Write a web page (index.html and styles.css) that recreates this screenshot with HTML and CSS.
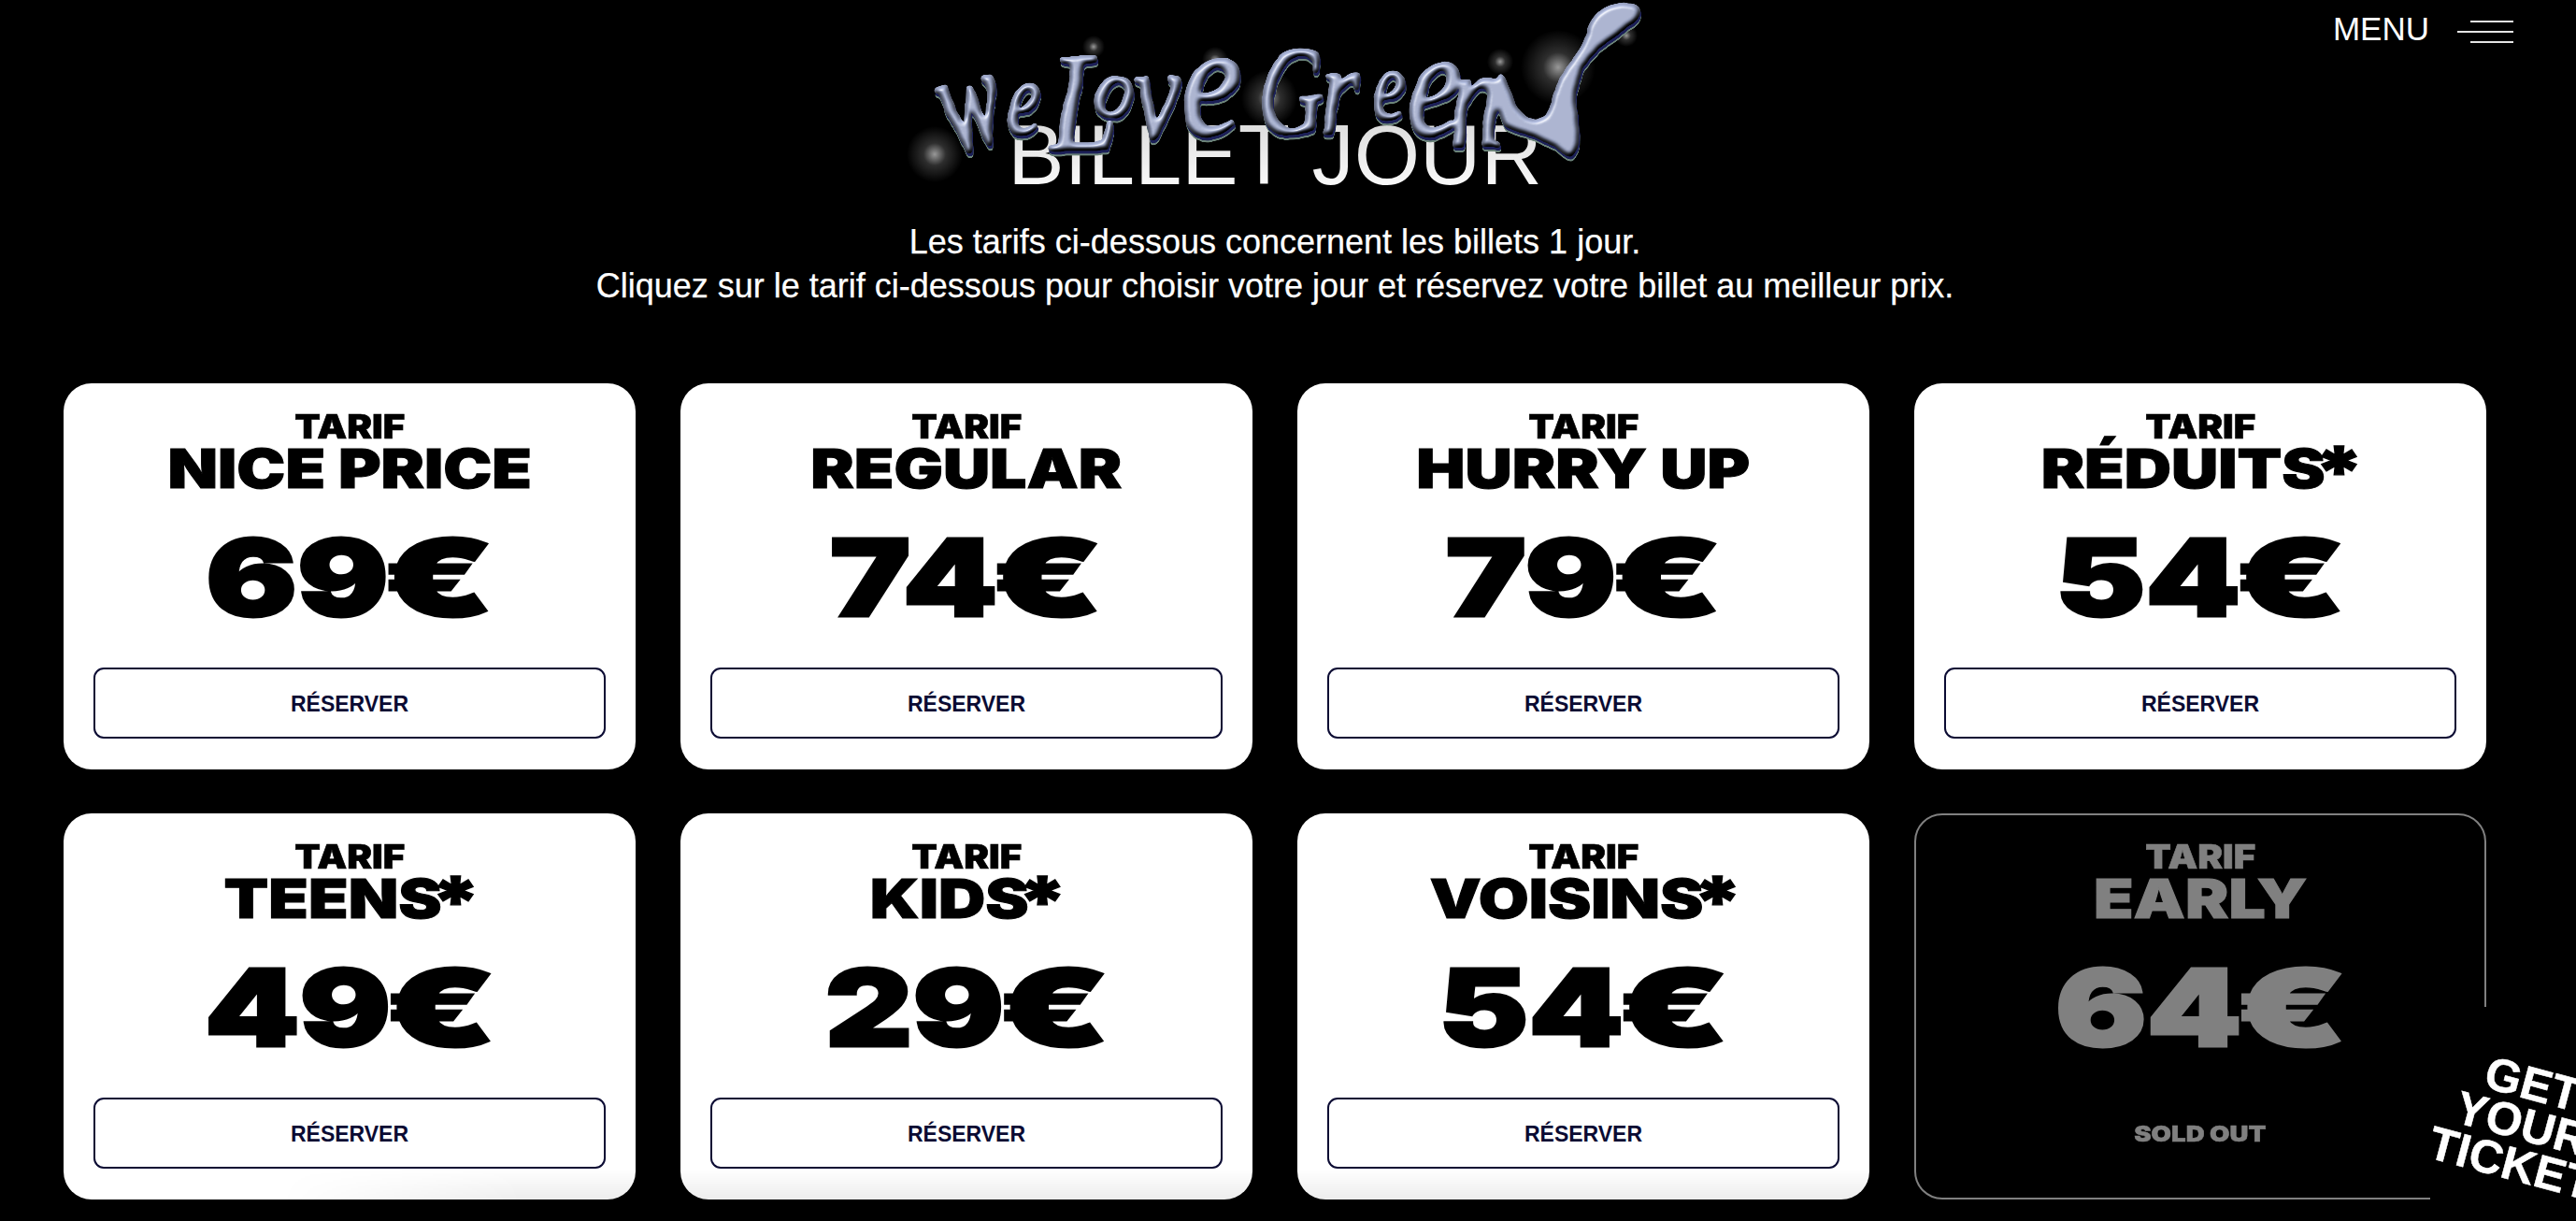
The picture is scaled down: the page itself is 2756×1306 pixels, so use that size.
FILE: index.html
```html
<!DOCTYPE html>
<html lang="fr">
<head>
<meta charset="utf-8">
<title>We Love Green - Billet jour</title>
<link rel="stylesheet" href="styles.css">
</head>
<body>
<nav class="menu">
  <span class="menu-label">MENU</span>
  <span class="burger"><i class="bar"></i><i class="bar bar-long"></i><i class="bar"></i></span>
</nav>
<main class="page">
  <header class="intro">
    <h1 class="title">BILLET JOUR</h1>
    <p class="lead">Les tarifs ci-dessous concernent les billets 1 jour.<br>Cliquez sur le tarif ci-dessous pour choisir votre jour et réservez votre billet au meilleur prix.</p>
  </header>
  <section class="grid">
    <article class="card"><div class="tarif"><span>TARIF</span></div><div class="name"><span>NICE PRICE</span></div><div class="price"><span>69<b class="eur">€</b></span></div><a class="btn">RÉSERVER</a></article>
    <article class="card"><div class="tarif"><span>TARIF</span></div><div class="name"><span>REGULAR</span></div><div class="price"><span>74<b class="eur">€</b></span></div><a class="btn">RÉSERVER</a></article>
    <article class="card"><div class="tarif"><span>TARIF</span></div><div class="name"><span>HURRY UP</span></div><div class="price"><span>79<b class="eur">€</b></span></div><a class="btn">RÉSERVER</a></article>
    <article class="card"><div class="tarif"><span>TARIF</span></div><div class="name"><span>RÉDUITS<b class="star">*</b></span></div><div class="price"><span>54<b class="eur">€</b></span></div><a class="btn">RÉSERVER</a></article>
    <article class="card"><div class="tarif"><span>TARIF</span></div><div class="name"><span>TEENS<b class="star">*</b></span></div><div class="price"><span>49<b class="eur">€</b></span></div><a class="btn">RÉSERVER</a></article>
    <article class="card"><div class="tarif"><span>TARIF</span></div><div class="name"><span>KIDS<b class="star">*</b></span></div><div class="price"><span>29<b class="eur">€</b></span></div><a class="btn">RÉSERVER</a></article>
    <article class="card"><div class="tarif"><span>TARIF</span></div><div class="name"><span>VOISINS<b class="star">*</b></span></div><div class="price"><span>54<b class="eur">€</b></span></div><a class="btn">RÉSERVER</a></article>
    <article class="card card-off"><div class="tarif"><span>TARIF</span></div><div class="name"><span>EARLY</span></div><div class="price"><span>64<b class="eur">€</b></span></div><div class="soldout"><span>SOLD OUT</span></div></article>
  </section>
</main>
<div class="fade"></div>
<svg class="logo" viewBox="940 0 840 220" role="img" aria-label="We Love Green">
  <defs>
    <radialGradient id="halo">
      <stop offset="0" stop-color="#fff" stop-opacity=".6"/>
      <stop offset=".4" stop-color="#fff" stop-opacity=".18"/>
      <stop offset="1" stop-color="#fff" stop-opacity="0"/>
    </radialGradient>
    <filter id="chrome" filterUnits="userSpaceOnUse" x="940" y="0" width="840" height="220" color-interpolation-filters="sRGB">
      <feMorphology in="SourceAlpha" operator="dilate" radius="1" result="fat"/>
      <feTurbulence type="fractalNoise" baseFrequency=".02" numOctaves="2" seed="7" result="noise"/>
      <feDisplacementMap in="fat" in2="noise" scale="9" xChannelSelector="R" yChannelSelector="G" result="wob"/>
      <feGaussianBlur in="wob" stdDeviation="1.6" result="soft"/>
      <feComponentTransfer in="soft" result="shape"><feFuncA type="linear" slope="8" intercept="-2.6"/></feComponentTransfer>
      <feGaussianBlur in="shape" stdDeviation="2.4" result="height"/>
      <feDiffuseLighting in="height" surfaceScale="6" diffuseConstant="1.05" lighting-color="#aeb9dd" result="diff"><feDistantLight azimuth="250" elevation="60"/></feDiffuseLighting>
      <feComposite in="diff" in2="shape" operator="in" result="body"/>
      <feSpecularLighting in="height" surfaceScale="6" specularConstant=".8" specularExponent="26" lighting-color="#fff" result="spec"><feDistantLight azimuth="235" elevation="50"/></feSpecularLighting>
      <feComposite in="spec" in2="shape" operator="in" result="shine"/>
      <feOffset in="shape" dx="1" dy="2.5" result="o1"/>
      <feFlood flood-color="#1c2058"/>
      <feComposite in2="o1" operator="in" result="navy"/>
      <feOffset in="shape" dx="1" dy="5" result="o2"/>
      <feFlood flood-color="#6b8379"/>
      <feComposite in2="o2" operator="in" result="moss"/>
      <feMerge><feMergeNode in="moss"/><feMergeNode in="navy"/><feMergeNode in="body"/><feMergeNode in="shine"/></feMerge>
    </filter>
  </defs>
  <g class="halos">
    <circle cx="1000" cy="165" r="30" fill="url(#halo)"/>
    <circle cx="1358" cy="105" r="30" fill="url(#halo)"/>
    <circle cx="1667" cy="72" r="40" fill="url(#halo)"/>
    <circle cx="1170" cy="50" r="12" fill="url(#halo)"/>
    <circle cx="1300" cy="64" r="14" fill="url(#halo)"/>
    <circle cx="1605" cy="66" r="14" fill="url(#halo)"/>
    <circle cx="1740" cy="38" r="12" fill="url(#halo)"/>
  </g>
  <g class="logo-type" filter="url(#chrome)">
    <text transform="translate(1018 166) rotate(-16) scale(.95 1.5)" font-size="106">w</text>
    <text transform="translate(1078 143) scale(1 1.4)" font-size="80">e</text>
    <text transform="translate(1124 160) scale(.85 1)" font-size="150">L</text>
    <text transform="translate(1170 125)" font-size="90">o</text>
    <text transform="translate(1214 146) scale(1 1.25)" font-size="108">v</text>
    <text transform="translate(1262 143) scale(1 1.15)" font-size="150">e</text>
    <text transform="translate(1347 143) scale(.7 1)" font-size="135">G</text>
    <text transform="translate(1412 141) scale(1 1.2)" font-size="110">r</text>
    <text transform="translate(1470 128) scale(1 1.4)" font-size="74">e</text>
    <text transform="translate(1505 143) scale(1 1.2)" font-size="130">e</text>
    <text transform="translate(1550 156) scale(1 1.3)" font-size="118">n</text>
    <path d="M1606 80C1616 100 1620 118 1640 128C1655 130 1662 118 1667 95C1670 72 1692 64 1698 38C1704 14 1722 4 1745 5C1756 6 1758 16 1748 24C1730 38 1704 48 1692 68C1684 86 1686 120 1688 150C1686 166 1680 170 1672 164C1655 148 1630 140 1612 132C1606 120 1602 100 1598 88Z"/>
  </g>
</svg>
<aside class="sticker"><div class="sticker-text">GET<br>YOUR<br>TICKET</div></aside>
</body>
</html>
```
FILE: styles.css
```css
html, body { margin: 0; background: #000; }
body { width: 2756px; height: 1306px; overflow: hidden; position: relative; font-family: "Liberation Sans", Arial, sans-serif; color: #fff; }

.page { width: 2728px; box-sizing: border-box; padding: 121px 68px 0; }
.intro { text-align: center; }
.title { margin: 0; font-size: 90.5px; line-height: 90px; font-weight: 400; background: linear-gradient(#d8d8d8, #fff); -webkit-background-clip: text; background-clip: text; color: transparent; }
.lead { margin: 24px 0 81px; font-size: 36px; line-height: 47px; -webkit-text-stroke: .25px #fff; }

.grid { display: grid; grid-template-columns: repeat(4, 612px); column-gap: 48px; row-gap: 47px; }
.card { height: 413px; box-sizing: border-box; padding: 28px 32px 32px; background: #fff; border-radius: 30px; color: #000; text-align: center; display: flex; flex-direction: column; font-family: Inter, "Liberation Sans", sans-serif; font-weight: 900; }
.card span { display: inline-block; white-space: nowrap; }
.tarif { height: 36px; line-height: 36px; font-size: 35px; margin-bottom: 5px; }
.tarif span { transform: scaleX(1.15); -webkit-text-stroke: .6px currentColor; }
.name { height: 44px; line-height: 44px; font-size: 58px; }
.name span { transform: scaleX(1.2); -webkit-text-stroke: 1px currentColor; }
.star { display: inline-block; font-weight: 900; margin-left: -5px; transform: scale(1.3); transform-origin: 50% 25%; }
.price { height: 117px; line-height: 117px; font-size: 114px; margin-top: 36px; }
.price span { transform: scaleX(1.27); -webkit-text-stroke: 3px currentColor; }
.eur { display: inline-block; font-weight: 900; margin: 0 9px 0 -1px; transform: scaleX(1.26); clip-path: inset(-10% -10% -10% 11%); }
.btn { margin-top: 38px; height: 76px; box-sizing: border-box; border: 2px solid #0b0b33; border-radius: 11px; padding-top: 2px; display: flex; align-items: center; justify-content: center; font-family: "Liberation Sans", Arial, sans-serif; font-size: 23px; font-weight: 700; color: #0b0b33; }

.card-off { background: #000; color: #808080; border: 2px solid #808080; padding: 26px 30px 30px; }
.soldout { margin-top: 40px; height: 75px; line-height: 75px; font-size: 23px; }
.soldout span { transform: scaleX(1.2); -webkit-text-stroke: .5px currentColor; }

.menu { position: absolute; top: 13px; right: 67px; display: flex; gap: 30px; }
.menu-label { font-size: 35px; line-height: 36px; }
.burger { display: flex; flex-direction: column; align-items: flex-end; gap: 9px; margin-top: 9px; }
.bar { display: block; width: 46px; height: 2px; background: #e4e4e4; }
.bar-long { width: 60px; }

.logo { position: absolute; left: 940px; top: 0; width: 840px; height: 220px; }
.logo-type text { font-family: "Liberation Serif", serif; font-style: italic; fill: #000; }

.fade { position: absolute; left: 300px; top: 1250px; width: 1720px; height: 33px; background: linear-gradient(rgba(0,0,0,0), rgba(0,0,0,.07)); -webkit-mask-image: linear-gradient(90deg, transparent, #000 260px); mask-image: linear-gradient(90deg, transparent, #000 260px); }

.sticker { position: absolute; left: 2600px; top: 1077px; width: 196px; height: 250px; background: #000; display: flex; align-items: center; justify-content: center; }
.sticker-text { transform: rotate(15deg); font-size: 50px; line-height: 44px; font-weight: 700; text-align: center; color: #fff; white-space: nowrap; -webkit-text-stroke: .5px #fff; }
```
